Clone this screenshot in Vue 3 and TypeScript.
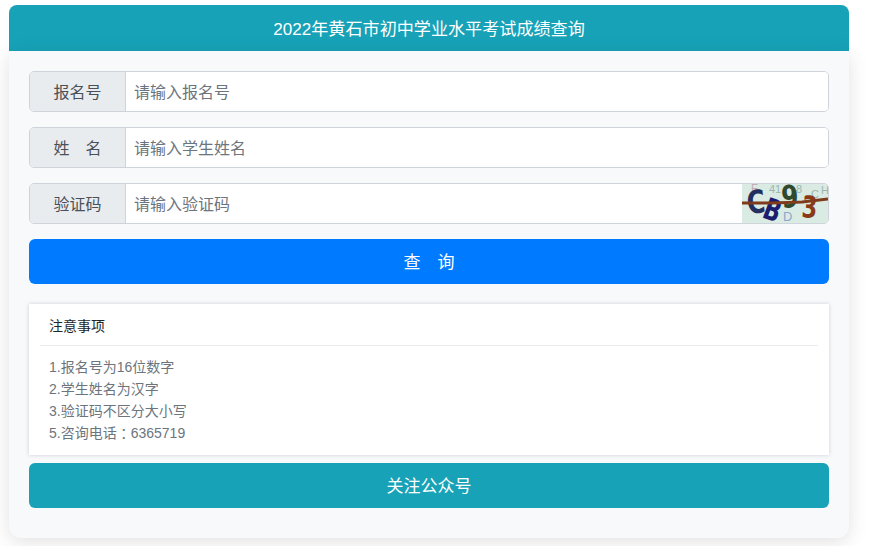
<script setup lang="ts">
interface Field { label: string; placeholder: string; captcha?: boolean }
const fields: Field[] = [
  { label: '报名号', placeholder: '请输入报名号' },
  { label: '姓\u3000名', placeholder: '请输入学生姓名' },
  { label: '验证码', placeholder: '请输入验证码', captcha: true },
]
const notes = ['1.报名号为16位数字', '2.学生姓名为汉字', '3.验证码不区分大小写']
</script>

<template>
  <div class="page">
    <div class="wrap">
      <header class="head">2022年黄石市初中学业水平考试成绩查询</header>
      <main class="panel">
        <div v-for="f in fields" :key="f.label" class="group">
          <span class="addon">{{ f.label }}</span>
          <input class="input" type="text" :placeholder="f.placeholder" />
          <span v-if="f.captcha" class="captcha">
            <svg width="86" height="39" viewBox="0 0 86 39">
              <rect width="86" height="39" fill="#d9ebe2" />
              <g font-family="'Liberation Sans', sans-serif" font-size="11" fill="#9db5b0">
                <text x="9" y="8" fill="#c0a8b0">E</text>
                <text x="27" y="9">41</text>
                <text x="54" y="9">8</text>
                <text x="69" y="14">C</text>
                <text x="79" y="10">H</text>
                <text x="41" y="37" fill="#8fa5cf" font-size="13">D</text>
              </g>
              <g font-family="'DejaVu Sans', sans-serif" font-weight="700">
                <text font-size="32" fill="#23305f" transform="translate(6 30) rotate(-6) scale(.78 1)">C</text>
                <text font-size="30" fill="#1c1d6e" transform="translate(19 33) rotate(20) scale(.74 1)">B</text>
                <text font-size="31" fill="#2f4a2e" transform="translate(40 24) rotate(-4) scale(.8 1)">9</text>
                <text font-size="30" fill="#8a3a16" transform="translate(59 33) rotate(4) scale(.75 1)">3</text>
              </g>
              <path d="M0 19 L30 19 L60 18 L86 15" stroke="#7f3b1c" stroke-width="2.8" fill="none" />
            </svg>
          </span>
        </div>
        <button class="btn primary" type="button">查&emsp;询</button>
        <section class="card">
          <h3 class="card-title">注意事项</h3>
          <div class="card-body">
            <p v-for="n in notes" :key="n">{{ n }}</p>
            <p>5.咨询电话<span class="colon">：</span>6365719</p>
          </div>
        </section>
        <button class="btn info" type="button">关注公众号</button>
      </main>
    </div>
  </div>
</template>

<style>
html, body { margin: 0; background: #fff; }
</style>

<style scoped>
* { box-sizing: border-box; }
.page {
  width: 887px;
  height: 546px;
  overflow: hidden;
  padding: 5px 0 0 9px;
  font-family: "Liberation Sans", "Noto Sans CJK SC", sans-serif;
}
.wrap { width: 840px; }
.head {
  height: 46px;
  line-height: 49px;
  background: #17a2b8;
  color: #fff;
  font-size: 17.1px;
  text-align: center;
  border-radius: 8px 8px 0 0;
}
.panel {
  height: 487px;
  padding: 20px;
  background: #f8f9fa;
  border-radius: 0 0 12px 12px;
  box-shadow: 0 4px 20px rgba(0, 0, 0, 0.12);
}
.group {
  display: flex;
  height: 41px;
  margin-bottom: 15px;
  background: #fff;
  border: 1px solid #ced4da;
  border-radius: 5px;
  overflow: hidden;
  font-size: 16px;
}
.addon {
  width: 96px;
  flex: none;
  background: #e9ecef;
  border-right: 1px solid #ced4da;
  color: #495057;
  text-align: center;
  line-height: 41px;
}
.input {
  flex: 1;
  min-width: 0;
  border: 0;
  outline: 0;
  padding: 2px 8px 0;
  font: inherit;
  background: #fff;
}
.input::placeholder { color: #6c757d; opacity: 1; }
.captcha { width: 86px; flex: none; display: block; height: 39px; }
.captcha svg { display: block; }
.btn {
  display: block;
  width: 100%;
  height: 45px;
  border: 0;
  border-radius: 6px;
  color: #fff;
  font-family: inherit;
  font-size: 17px;
  text-align: center;
  padding: 0 0 2px;
}
.primary { background: #007bff; }
.info { background: #17a2b8; }
.card {
  margin: 20px 0 8px;
  height: 151px;
  background: #fff;
  padding: 0 11px;
  box-shadow: 0 0 4px rgba(60, 60, 100, 0.22);
}
.card-title {
  margin: 0;
  height: 42px;
  line-height: 44px;
  padding-left: 9px;
  font-size: 14px;
  font-weight: 400;
  color: #212529;
  border-bottom: 1px solid #e9ecef;
}
.card-body { padding: 10px 9px 0; }
.card-body p {
  margin: 0;
  font-size: 14px;
  line-height: 22px;
  height: 22px;
  color: #6c757d;
}
.colon { font-family: "Noto Sans CJK TC", sans-serif; line-height: 1; display: inline-block; vertical-align: -1px; }
</style>
